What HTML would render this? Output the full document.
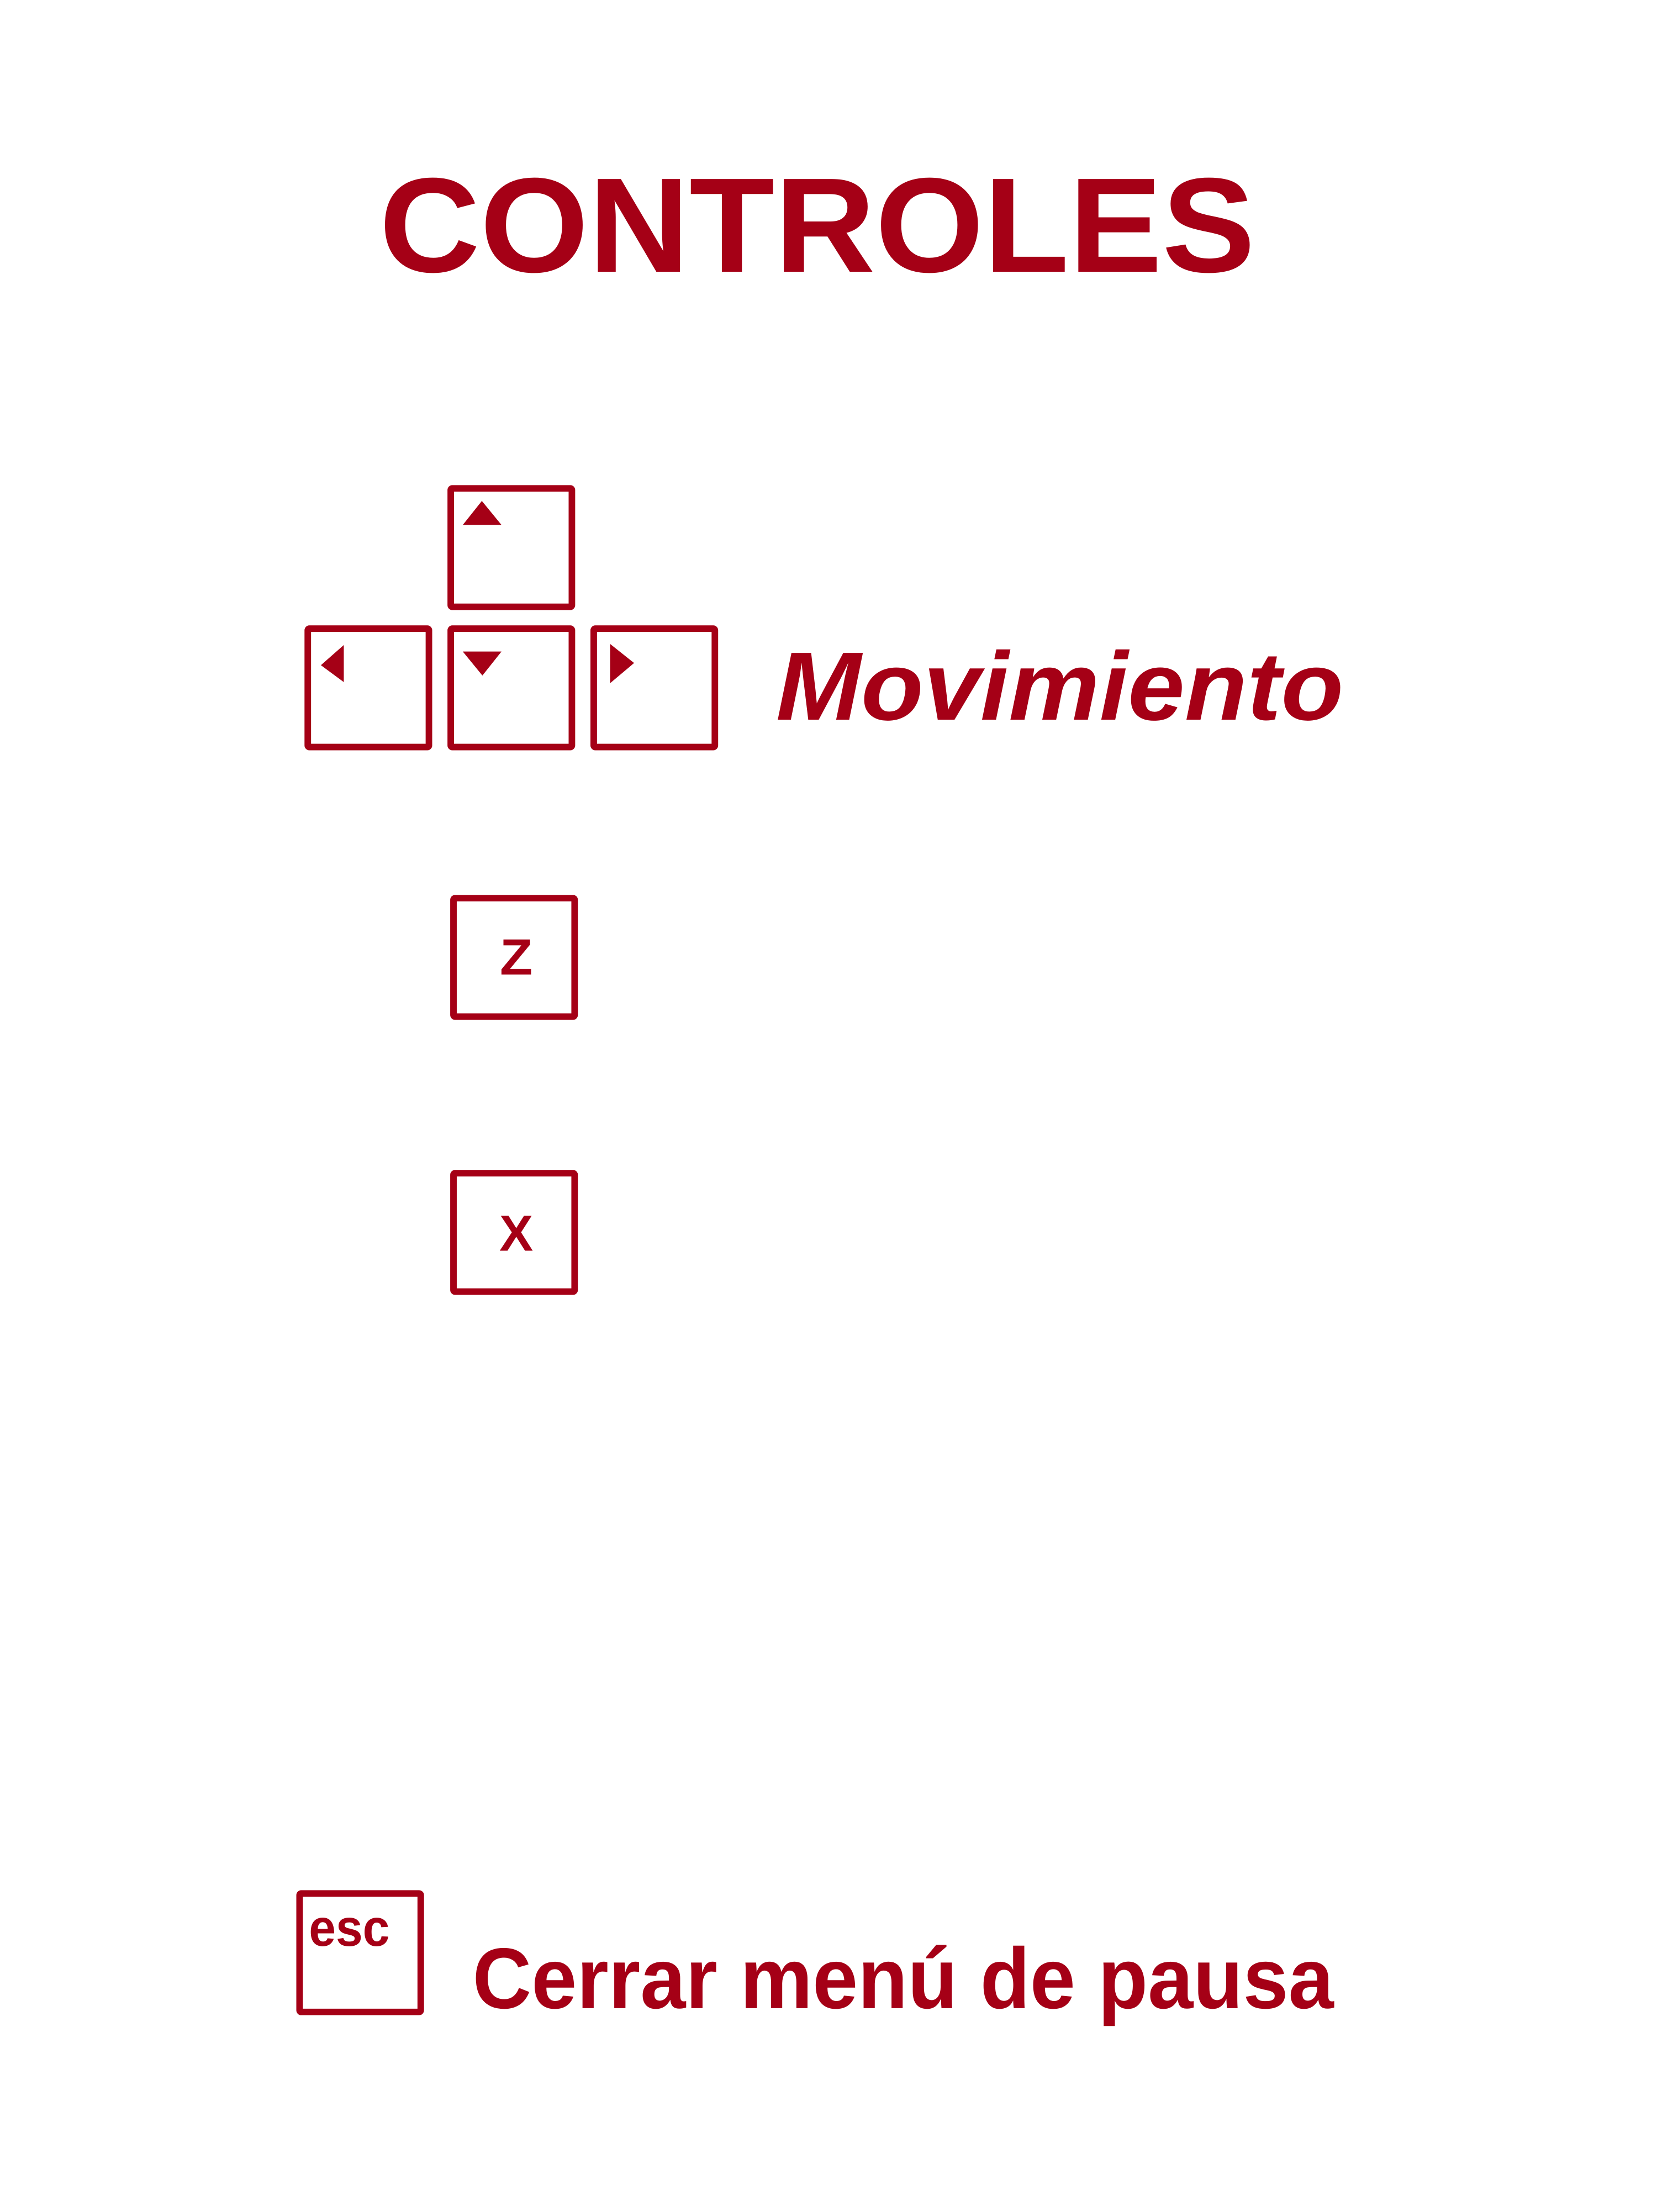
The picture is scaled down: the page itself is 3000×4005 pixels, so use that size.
<!DOCTYPE html>
<html><head><meta charset="utf-8"><style>
html,body{margin:0;padding:0;background:#fff;}
body{width:3000px;height:4000px;overflow:hidden;}
</style></head><body>
<svg width="3000" height="4000" viewBox="0 0 3000 4000" xmlns="http://www.w3.org/2000/svg">
<g transform="scale(0.988)">
<g fill="#a50016" font-family="'Liberation Sans', 'DejaVu Sans', sans-serif" font-weight="bold">
<text x="695" y="498" font-size="247" textLength="1605" lengthAdjust="spacingAndGlyphs">CONTROLES</text>
<text x="1422" y="1319" font-size="178" textLength="1040" lengthAdjust="spacingAndGlyphs" font-style="italic">Movimiento</text>
<text x="866" y="3680" font-size="158" textLength="1578" lengthAdjust="spacingAndGlyphs">Cerrar menú de pausa</text>
<text x="916" y="1786" font-size="93" textLength="60" lengthAdjust="spacingAndGlyphs">Z</text>
<text x="915" y="2292" font-size="93" textLength="62" lengthAdjust="spacingAndGlyphs">X</text>
<text x="566" y="3566" font-size="96" textLength="148" lengthAdjust="spacingAndGlyphs">esc</text>
</g>
<g fill="none" stroke="#a50016" stroke-width="12">
<rect x="826" y="895" width="222" height="217" rx="3"/>
<rect x="564" y="1152" width="222" height="217" rx="3"/>
<rect x="826" y="1152" width="222" height="217" rx="3"/>
<rect x="1088" y="1152" width="222" height="217" rx="3"/>
<rect x="831" y="1646" width="222" height="217" rx="3"/>
<rect x="831" y="2150" width="222" height="217" rx="3"/>
<rect x="549" y="3470" width="222" height="217" rx="3"/>
</g>
<g fill="#a50016">
<polygon points="883,918 848,962 919,962"/>
<polygon points="630,1182 588,1219 630,1250"/>
<polygon points="848,1194 919,1194 884,1238"/>
<polygon points="1118,1180 1162,1215 1118,1252"/>
</g>
</g>
</svg>
</body></html>
